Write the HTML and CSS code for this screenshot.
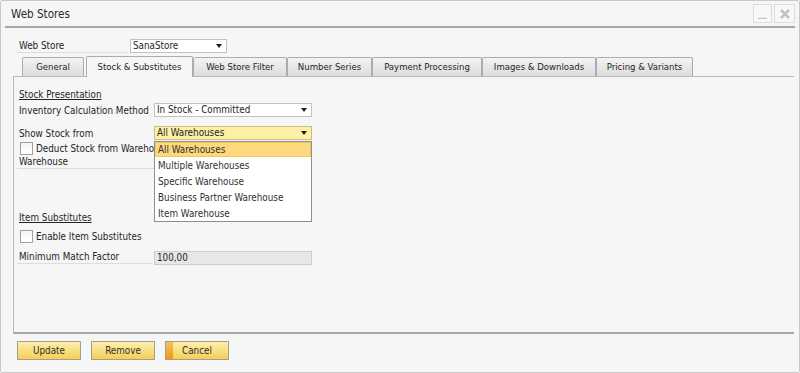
FILE: index.html
```html
<!DOCTYPE html>
<html>
<head>
<meta charset="utf-8">
<link rel="stylesheet" href="styles.css">
</head>
<body>
<div class="window">
  <div class="titlebar">
    <span class="title">Web Stores</span>
    <div class="winbtns">
      <span class="wbtn wbtn-min"><svg width="11" height="11" viewBox="0 0 11 11"><path d="M1 10.5H10" stroke="#c6c6c6" stroke-width="1.5"/></svg></span>
      <span class="wbtn wbtn-close"><svg width="12" height="12" viewBox="0 0 12 12"><path d="M2 2L10 10M10 2L2 10" stroke="#c2c2c2" stroke-width="2.6"/></svg></span>
    </div>
  </div>
  <div class="titleline"></div>
  <div class="content">
    <div class="store-row">
      <span class="store-label">Web Store</span>
      <div class="combo combo-store"><span>SanaStore</span><span class="arrow"></span></div>
    </div>
    <div class="tabs">
      <div class="tab t-general">General</div>
      <div class="tab t-stock active">Stock &amp; Substitutes</div>
      <div class="tab t-filter">Web Store Filter</div>
      <div class="tab t-number">Number Series</div>
      <div class="tab t-payment">Payment Processing</div>
      <div class="tab t-images">Images &amp; Downloads</div>
      <div class="tab t-pricing">Pricing &amp; Variants</div>
    </div>
    <div class="panel">
      <div class="section">Stock Presentation</div>
      <div class="field-row r-inv">
        <span class="lbl">Inventory Calculation Method</span>
        <div class="combo combo-wide"><span>In Stock - Committed</span><span class="arrow"></span></div>
      </div>
      <div class="field-row r-show">
        <span class="lbl">Show Stock from</span>
        <div class="combo-wrap">
          <div class="combo combo-wide combo-active"><span>All Warehouses</span><span class="arrow"></span></div>
          <div class="dropdown">
            <div class="opt sel">All Warehouses</div>
            <div class="opt">Multiple Warehouses</div>
            <div class="opt">Specific Warehouse</div>
            <div class="opt">Business Partner Warehouse</div>
            <div class="opt">Item Warehouse</div>
          </div>
        </div>
      </div>
      <div class="check-row r-deduct">
        <span class="box"></span>
        <span class="check-text">Deduct Stock from Warehouse</span>
      </div>
      <div class="lined-row r-wh">Warehouse</div>
      <div class="section r-sub">Item Substitutes</div>
      <div class="check-row r-enable">
        <span class="box"></span>
        <span class="check-text">Enable Item Substitutes</span>
      </div>
      <div class="field-row r-min">
        <span class="lbl lbl-lined">Minimum Match Factor</span>
        <div class="field">100,00</div>
      </div>
    </div>
    <div class="buttons">
      <div class="btn">Update</div>
      <div class="btn">Remove</div>
      <div class="btn btn-focus">Cancel</div>
    </div>
  </div>
</div>
</body>
</html>
```
FILE: styles.css
```css
* { box-sizing: border-box; }
html, body { margin: 0; padding: 0; }
body {
  width: 800px;
  height: 373px;
  background: #ffffff;
  font-family: "DejaVu Sans Condensed", "DejaVu Sans", sans-serif;
  font-stretch: condensed;
  font-size: 9.8px;
  color: #252525;
}
.window {
  width: 800px;
  height: 373px;
  border: 1px solid #c8c8c8;
  border-radius: 2px;
  background: #f6f6f6;
  display: flex;
  flex-direction: column;
}
.titlebar {
  height: 25px;
  display: flex;
  justify-content: space-between;
  align-items: center;
  padding: 0 4px 0 10px;
}
.title { font-size: 11.6px; color: #2a2a2a; }
.winbtns { display: flex; gap: 2px; align-self: flex-start; margin-top: 3px; }
.wbtn {
  height: 19px;
  border: 1px solid #dcdcdc;
  background: #f8f8f8;
  display: flex;
  align-items: center;
  justify-content: center;
}
.wbtn-min { width: 19px; }
.wbtn-close { width: 21px; }
.titleline { height: 2px; background: #a7a7a7; margin: 0 4px; }
.content {
  flex: 1;
  padding: 11px 5px 0 12px;
  display: flex;
  flex-direction: column;
}
.store-row { display: flex; height: 14px; }
.store-label {
  margin-left: 4px;
  width: 111px;
  padding-left: 2px;
  height: 14px;
  line-height: 13px;
  border-bottom: 1px solid #dddddd;
}
.combo {
  height: 14px;
  border: 1px solid #c2c2c2;
  background: #ffffff;
  display: flex;
  align-items: center;
  justify-content: space-between;
  padding: 0 4px 0 2px;
  line-height: 12px;
}
.combo-store { width: 97px; margin-left: 2px; }
.combo-wide { width: 158px; }
.combo-active { background: #fdefa4; border-color: #c9bd8e; }
.arrow {
  width: 0;
  height: 0;
  border-left: 3.5px solid transparent;
  border-right: 3.5px solid transparent;
  border-top: 4px solid #1e1e1e;
}
.tabs {
  display: flex;
  align-items: flex-end;
  height: 20px;
  margin-top: 3px;
  padding-left: 9px;
  position: relative;
  z-index: 1;
}
.tab {
  height: 19px;
  border: 1px solid #acacac;
  border-bottom: none;
  border-radius: 2px 2px 0 0;
  background: linear-gradient(#f3f3f3, #dcdcdc);
  text-align: center;
  line-height: 18px;
  font-size: 9.5px;
  white-space: nowrap;
}
.tab.active {
  height: 21px;
  margin-bottom: -1px;
  background: #f6f6f6;
  line-height: 20px;
}
.t-general { width: 62px; }
.t-stock { width: 107px; margin-left: 2px; }
.t-filter { width: 94px; }
.t-number { width: 85px; }
.t-payment { width: 110px; }
.t-images { width: 114px; }
.t-pricing { width: 97px; }
.panel {
  height: 258px;
  border-top: 1px solid #b8b8b8;
  border-left: 1px solid #b8b8b8;
  border-bottom: 2px solid #a8a8a8;
  padding: 11px 0 0 5px;
  display: flex;
  flex-direction: column;
}
.section { height: 14px; line-height: 14px; text-decoration: underline; }
.field-row { display: flex; height: 14px; align-items: center; }
.lbl { width: 135px; white-space: nowrap; }
.r-inv { margin-top: 1px; }
.r-show { margin-top: 9px; }
.combo-wrap { position: relative; }
.dropdown {
  position: absolute;
  left: 0;
  top: 15px;
  width: 158px;
  border: 1px solid #8e8e8e;
  background: #ffffff;
  z-index: 5;
  color: #303030;
}
.opt { height: 16px; line-height: 16px; padding: 1px 0 0 3px; white-space: nowrap; }
.opt.sel { height: 15px; line-height: 14px; background: #fdd87c; box-shadow: inset 0 0 0 1px #f2c766; }
.check-row { display: flex; align-items: center; height: 14px; }
.r-deduct { margin-top: 1px; width: 135px; overflow: hidden; }
.box {
  flex: none;
  width: 13px;
  height: 13px;
  margin-left: 1px;
  border: 1px solid #a0a0a0;
  background: linear-gradient(#f4f4f4, #ffffff);
}
.check-text { margin-left: 3px; white-space: nowrap; }
.lined-row {
  height: 14px;
  line-height: 13px;
  width: 295px;
  margin-left: -2px;
  padding-left: 2px;
  border-bottom: 1px solid #dddddd;
}
.r-sub { margin-top: 42px; }
.r-enable { margin-top: 4px; }
.r-min { margin-top: 8px; }
.lbl-lined {
  margin-left: -2px;
  padding-left: 2px;
  height: 13px;
  line-height: 12px;
  border-bottom: 1px solid #dddddd;
  align-self: flex-start;
}
.field {
  width: 158px;
  height: 14px;
  margin-left: 2px;
  border: 1px solid #cdcdcd;
  background: #e7e7e7;
  line-height: 12px;
  padding-left: 2px;
}
.buttons { display: flex; gap: 10px; margin-top: 7px; padding-left: 4px; }
.btn {
  width: 64px;
  height: 19px;
  border: 1px solid #a39f8a;
  background: linear-gradient(#fdeeb0, #f9df82 50%, #f4cf57);
  text-align: center;
  line-height: 17px;
  color: #303030;
}
.btn-focus {
  background:
    linear-gradient(#f7c05a, #ef9a14) left / 7px 100% no-repeat,
    linear-gradient(#fdeeb0, #f9df82 50%, #f4cf57);
}
```
